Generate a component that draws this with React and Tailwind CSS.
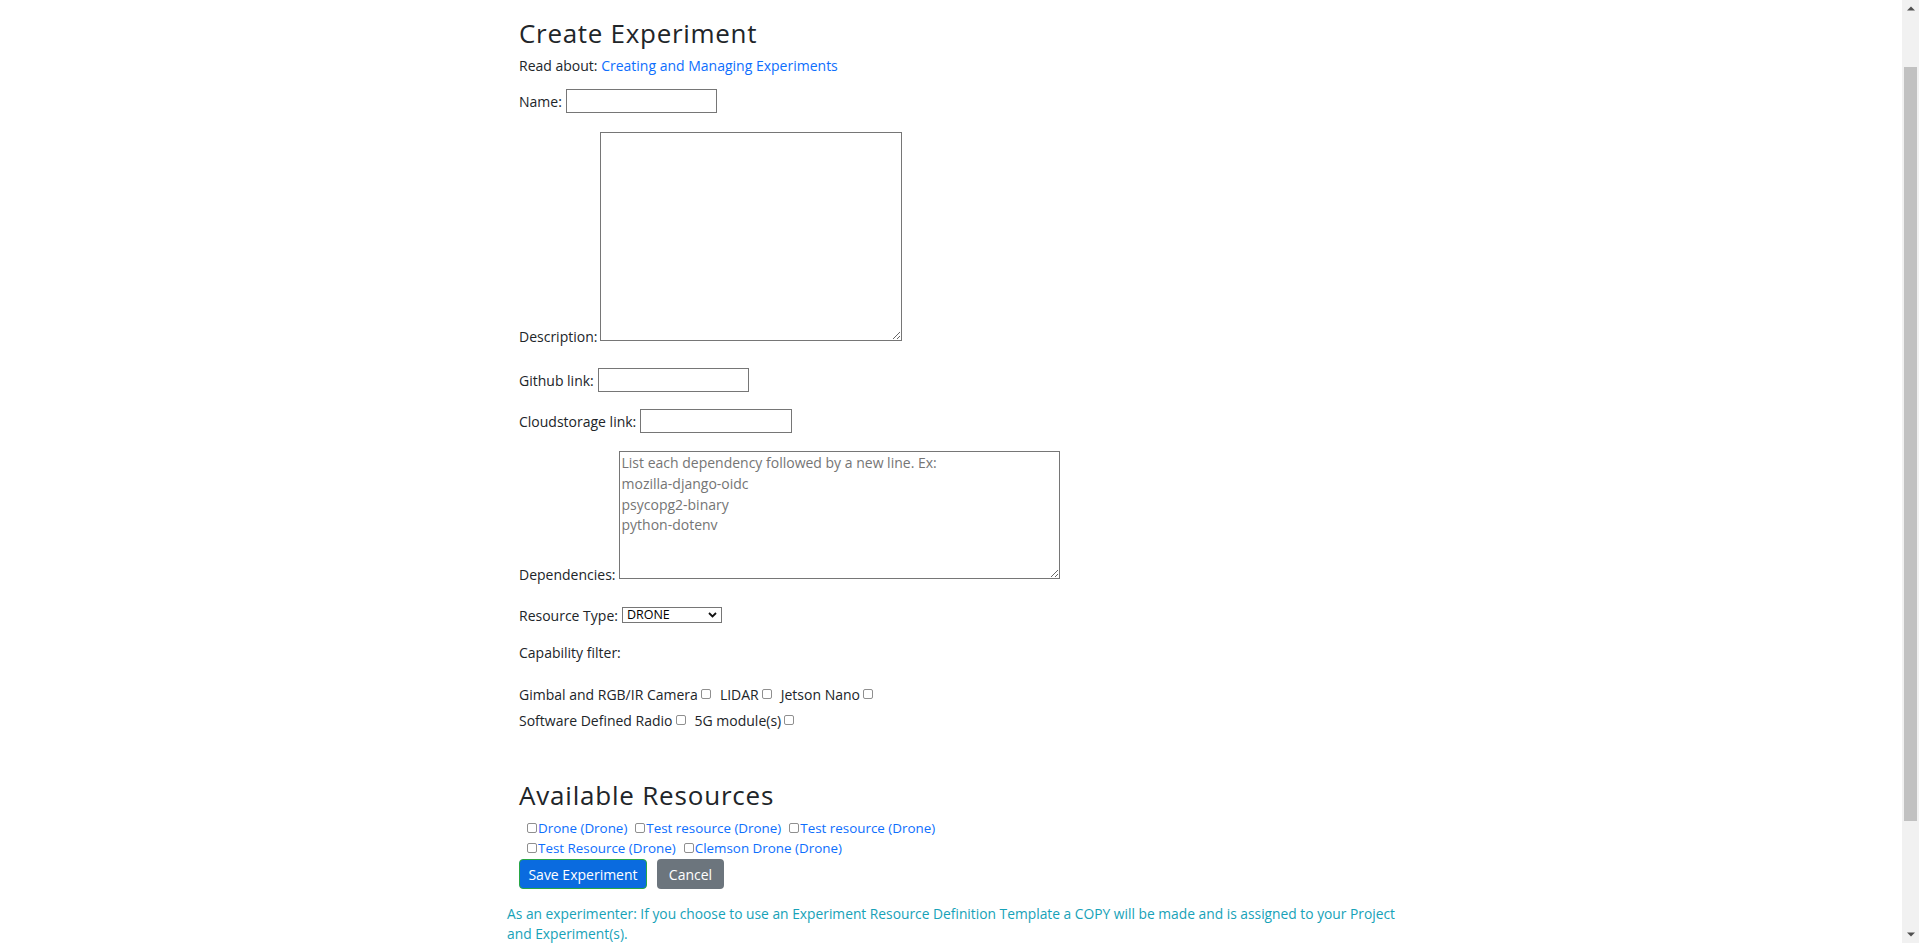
import { useLayoutEffect, useRef } from "react";

const capabilities = [
  ["Gimbal and RGB/IR Camera", "LIDAR", "Jetson Nano"],
  ["Software Defined Radio", "5G module(s)"],
];

const resources = [
  ["Drone (Drone)", "Test resource (Drone)", "Test resource (Drone)"],
  ["Test Resource (Drone)", "Clemson Drone (Drone)"],
];

function Box() {
  return <span className="inline-block h-[10px] w-[10px] shrink-0 rounded-[2px] border border-[#8f8f8f] bg-white" />;
}

function Scrollbar() {
  return (
    <div className="flex w-[17px] shrink-0 flex-col bg-[#f1f1f1]">
      <div className="flex h-[17px] items-center justify-center">
        <svg width="8" height="5" viewBox="0 0 8 5">
          <path d="M0 4.5L4 0.5L8 4.5Z" fill="#505050" />
        </svg>
      </div>
      <div className="flex-1 px-[2px] pt-[50px]">
        <div className="h-[754px] bg-[#c1c1c1]" />
      </div>
      <div className="flex h-[17px] items-center justify-center">
        <svg width="8" height="5" viewBox="0 0 8 5">
          <path d="M0 0.5L4 4.5L8 0.5Z" fill="#505050" />
        </svg>
      </div>
    </div>
  );
}

export default function App() {
  const pageRef = useRef(null);

  // the page is shown scrolled a little
  useLayoutEffect(() => {
    if (pageRef.current) pageRef.current.scrollTop = 62;
  }, []);

  return (
    <div className="flex h-screen bg-white font-['Open_Sans',sans-serif] text-[14px] text-[#212529]">
      <div ref={pageRef} className="flex-1 overflow-hidden">
        <div className="min-h-[1137px] pt-[62px]">
          <div className="ml-[507px] w-[900px]">
            <div className="px-[12px]">
              <h1 className="mt-[17px] text-[26px] leading-[32px] font-normal tracking-[0.7px]">Create Experiment</h1>
              <p className="mt-[7px] leading-[20px]">
                Read about: <a className="text-[#0d6efd]">Creating and Managing Experiments</a>
              </p>

              {/* name */}
              <div className="mt-[13px] flex items-center gap-[4px]">
                <label>Name:</label>
                <input className="h-[24px] w-[151px] border border-[#767676] px-[2px]" />
              </div>

              {/* description */}
              <div className="mt-[19px] flex items-end gap-[3px]">
                <label className="mb-[-3px] leading-none">Description:</label>
                <textarea className="h-[209px] w-[302px] border border-[#767676] p-[2px]" />
              </div>

              <div className="mt-[27px] flex items-center gap-[4px]">
                <label>Github link:</label>
                <input className="h-[24px] w-[151px] border border-[#767676] px-[2px]" />
              </div>

              <div className="mt-[17px] flex items-center gap-[4px]">
                <label>Cloudstorage link:</label>
                <input className="h-[24px] w-[152px] border border-[#767676] px-[2px]" />
              </div>

              <div className="mt-[18px] flex items-end gap-[3px]">
                <label className="mb-[-3px] leading-none">Dependencies:</label>
                <textarea
                  className="h-[128px] w-[441px] border border-[#767676] px-[2px] pt-[1px] leading-[20.8px] placeholder:text-[#757575]"
                  placeholder={"List each dependency followed by a new line. Ex:\nmozilla-django-oidc\npsycopg2-binary\npython-dotenv"}
                />
              </div>

              {/* resource type */}
              <div className="mt-[28px] flex items-center gap-[4px]">
                <label className="leading-[15px]">Resource Type:</label>
                <div className="flex h-[16px] w-[100px] items-center justify-between border border-[#767676] pr-[4px] pl-[4px] text-[12.5px] leading-none text-black">
                  <span>DRONE</span>
                  <svg width="9" height="6" viewBox="0 0 9 6" fill="none">
                    <path d="M1 1l3.5 3.5L8 1" stroke="#111" strokeWidth="1.8" />
                  </svg>
                </div>
              </div>

              <p className="mt-[20px] leading-[20px]">Capability filter:</p>

              <div className="mt-[18px]">
                {capabilities.map((row, i) => (
                  <div key={i} className="flex h-[26px] items-center gap-[9px]">
                    {row.map((c) => (
                      <span key={c} className="flex items-center gap-[3px]">
                        {c}
                        <Box />
                      </span>
                    ))}
                  </div>
                ))}
              </div>

              <h2 className="mt-[46px] text-[26px] leading-[32px] font-normal tracking-[0.8px]">Available Resources</h2>

              <div className="mt-[7px] pl-[8px] text-[13.4px]">
                {resources.map((row, i) => (
                  <div key={i} className="flex h-[20px] items-center gap-[8px]">
                    {row.map((r, j) => (
                      <span key={j} className="flex items-center gap-[1px] text-[#0d6efd]">
                        <Box />
                        {r}
                      </span>
                    ))}
                  </div>
                ))}
              </div>

              <div className="mt-[1px] flex gap-[10px]">
                <button className="h-[30px] w-[128px] rounded-[4px] border border-[#28a745] bg-[#0a6bdf] text-white">
                  Save Experiment
                </button>
                <button className="h-[30px] w-[67px] rounded-[4px] bg-[#6c757d] text-white">Cancel</button>
              </div>
            </div>

            <p className="mt-[15px] text-[13.8px] leading-[20px] text-[#17a2b8]">
              <span className="block whitespace-nowrap">
                As an experimenter: If you choose to use an Experiment Resource Definition Template a COPY will be made and is assigned to your Project
              </span>
              <span className="block">and Experiment(s).</span>
            </p>
          </div>
        </div>
      </div>
      <Scrollbar />
    </div>
  );
}
